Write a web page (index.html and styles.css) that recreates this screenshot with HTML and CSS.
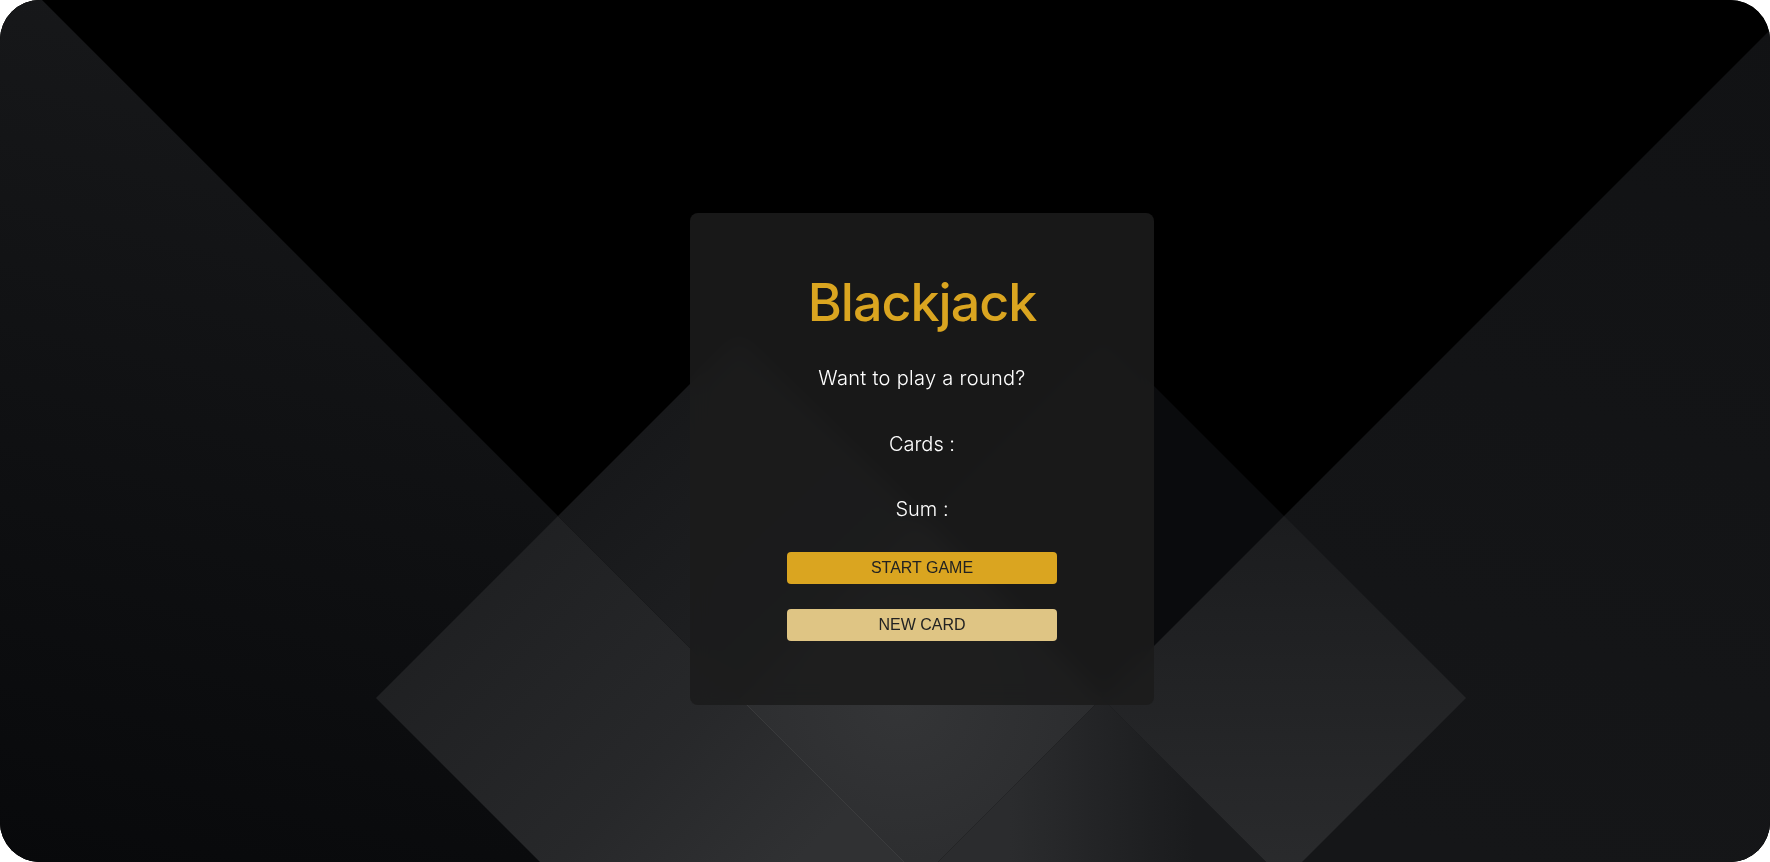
FILE: index.html
```html
<!DOCTYPE html>
<html lang="en">
<head>
<meta charset="utf-8">
<title>Blackjack</title>
<link rel="stylesheet" href="styles.css">
</head>
<body>
<main class="stage">
  <svg class="backdrop" viewBox="0 0 1770 862" preserveAspectRatio="none" aria-hidden="true">
    <defs>
      <linearGradient id="gL" gradientUnits="userSpaceOnUse" x1="200" y1="0" x2="0" y2="862">
        <stop offset="0" stop-color="#17181a"/>
        <stop offset="1" stop-color="#08090b"/>
      </linearGradient>
      <linearGradient id="gR" gradientUnits="userSpaceOnUse" x1="1770" y1="0" x2="1500" y2="862">
        <stop offset="0" stop-color="#111214"/>
        <stop offset="1" stop-color="#151618"/>
      </linearGradient>
      <linearGradient id="gD1L" gradientUnits="userSpaceOnUse" x1="450" y1="600" x2="760" y2="900">
        <stop offset="0" stop-color="#1f2022"/>
        <stop offset="0.6" stop-color="#27282a"/>
        <stop offset="1" stop-color="#303133"/>
      </linearGradient>
      <linearGradient id="gD1TR" gradientUnits="userSpaceOnUse" x1="650" y1="420" x2="830" y2="610">
        <stop offset="0" stop-color="#17181a"/>
        <stop offset="1" stop-color="#202123"/>
      </linearGradient>
      <radialGradient id="gC" gradientUnits="userSpaceOnUse" cx="900" cy="700" r="230">
        <stop offset="0" stop-color="#343537"/>
        <stop offset="1" stop-color="#2a2b2d"/>
      </radialGradient>
      <linearGradient id="gD2BR" gradientUnits="userSpaceOnUse" x1="1284" y1="516" x2="1284" y2="880">
        <stop offset="0" stop-color="#1b1c1e"/>
        <stop offset="1" stop-color="#2a2b2d"/>
      </linearGradient>
      <linearGradient id="gD2BL" gradientUnits="userSpaceOnUse" x1="1010" y1="790" x2="1195" y2="790">
        <stop offset="0" stop-color="#2b2c2e"/>
        <stop offset="1" stop-color="#1a1b1d"/>
      </linearGradient>
    </defs>
    <rect x="0" y="0" width="1770" height="862" fill="#000"/>
    <polygon points="42,0 1042,1000 -50,1000 -50,0" fill="url(#gL)"/>
    <polygon points="1800,0 1900,0 1900,1000 800,1000" fill="url(#gR)"/>
    <polygon points="558,516 921,879 739,1061 376,698" fill="url(#gD1L)"/>
    <polygon points="558,516 739,335 921,517 740,698" fill="url(#gD1TR)"/>
    <polygon points="740,698 921,517 1102,698 921,879" fill="url(#gC)"/>
    <polygon points="921,517 1103,335 1284,516 1102,698" fill="#0a0b0d"/>
    <polygon points="1102,698 1284,516 1466,698 1284,880" fill="url(#gD2BR)"/>
    <polygon points="1102,698 1284,880 1103,1061 921,879" fill="url(#gD2BL)"/>
    <line x1="740" y1="698" x2="921" y2="879" stroke="rgba(255,255,255,0.10)" stroke-width="1"/>
  </svg>

  <section class="game">
    <h1 class="title">Blackjack</h1>
    <p class="message">Want to play a round?</p>
    <p class="stat stat-cards">Cards :</p>
    <p class="stat stat-sum">Sum :</p>
    <button class="btn btn-start" type="button">START GAME</button>
    <button class="btn btn-new" type="button">NEW CARD</button>
  </section>
</main>
</body>
</html>
```

FILE: styles.css
```css
html, body {
  margin: 0;
  height: 100%;
  background: #ffffff;
}

.stage {
  position: relative;
  box-sizing: border-box;
  height: 100vh;
  border-radius: 40px;
  overflow: hidden;
  background: #000;
  display: flex;
  justify-content: center;
  align-items: flex-start;
  padding: 213px 0 0 74px;
}

.backdrop {
  position: absolute;
  inset: 0;
  width: 100%;
  height: 100%;
  z-index: 0;
  display: block;
}

.game {
  position: relative;
  z-index: 1;
  box-sizing: border-box;
  width: 464px;
  height: 492px;
  padding-top: 60px;
  display: flex;
  flex-direction: column;
  align-items: center;
  background: rgba(27, 27, 27, 0.88);
  -webkit-backdrop-filter: blur(10px);
  backdrop-filter: blur(10px);
  border-radius: 8px;
}

.title {
  margin: 0;
  font-family: Inter, "Noto Sans", sans-serif;
  font-weight: 500;
  font-size: 52px;
  line-height: 60px;
  letter-spacing: -1px;
  color: #daa520;
}

.message,
.stat {
  margin: 0;
  font-family: Inter, "Noto Sans", sans-serif;
  font-weight: 300;
  font-size: 20px;
  line-height: 24px;
  color: #ffffff;
}

.message {
  margin-top: 33px;
  letter-spacing: 0.3px;
}

.stat-cards {
  margin-top: 42px;
}

.stat-sum {
  margin-top: 41px;
}

.btn {
  width: 270px;
  height: 32px;
  padding: 0;
  border: none;
  border-radius: 4px;
  font-family: "Liberation Sans", Arial, sans-serif;
  font-size: 16px;
  color: #222222;
  cursor: pointer;
}

.btn-start {
  margin-top: 31px;
  background: #daa520;
}

.btn-new {
  margin-top: 25px;
  background: #dfc584;
}
```
